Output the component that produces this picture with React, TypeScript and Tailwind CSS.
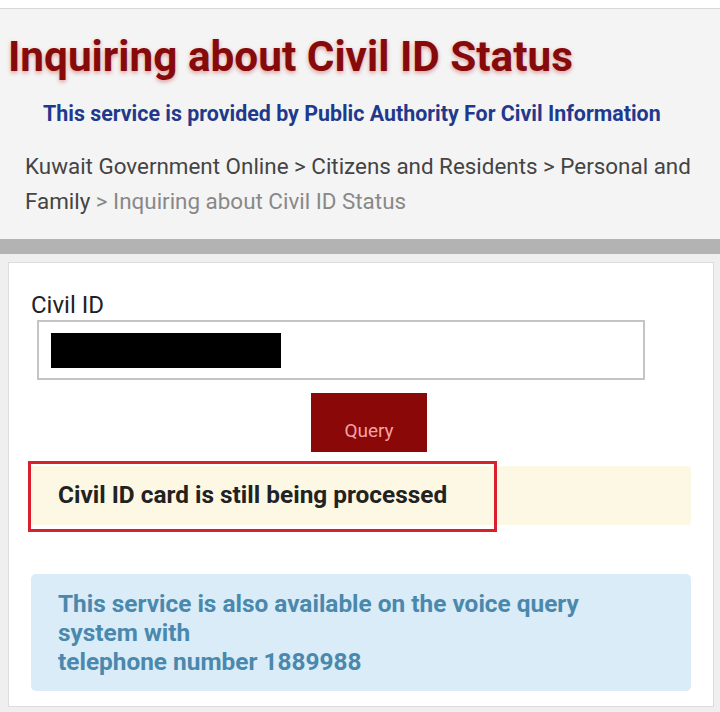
import React from "react";

export default function App() {
  const font = { fontFamily: 'Roboto, "Liberation Sans", sans-serif' };
  return (
    <div className="w-[720px] h-[712px] overflow-hidden bg-[#efefef]" style={font}>
      <div className="h-[9px] bg-white border-b border-[#d8d8d8]" />
      <div className="bg-[#f4f4f4] pt-[25px] pb-[20px]">
        <h1 className="pl-[8px] text-[42.3px] leading-[46px] font-bold text-[#870a0a] [text-shadow:0_2px_4px_rgba(190,50,50,0.45)]">
          Inquiring about Civil ID Status
        </h1>
        <p className="mt-[21px] pl-[43px] text-[21.4px] leading-[26px] font-bold text-[#1f3a8c]">
          This service is provided by Public Authority For Civil Information
        </p>
        <p className="mt-[22px] pl-[25px] pr-[16px] text-[22.4px] leading-[35px] text-[#444]">
          Kuwait Government Online &gt; Citizens and Residents &gt; Personal and Family <span className="text-[#888]">&gt; Inquiring about Civil ID Status</span>
        </p>
      </div>
      <div className="h-[15px] bg-[#b3b3b3]" />
      <div className="pl-[8px] pr-[6px] pt-[8px]">
        <div className="bg-white border border-[#dcdcdc] h-[445px] pt-[28px] pl-[22px] pr-[22px]">
          <label className="block text-[24px] leading-[28px] text-[#222]">Civil ID</label>
          <div className="mt-[1px] ml-[6px] w-[608px] h-[60px] border-2 border-[#c4c4c4] flex items-center pl-[12px]">
            <div className="w-[230px] h-[35px] bg-black" />
          </div>
          <div className="flex justify-center mt-[13px] pl-[16px]">
            <button className="w-[116px] h-[59px] bg-[#8a0808] text-[#f4a3a3] text-[19px] pt-[18px]">Query</button>
          </div>
          <div className="relative mt-[14px] w-[662px] h-[59px] bg-[#fcf8e3] rounded-[3px] ml-[-2px]">
            <div className="absolute left-[-1px] top-[-5px] w-[469px] h-[71px] border-[3px] border-[#d9202c]" />
            <div className="absolute left-[29px] top-0 h-[59px] flex items-center text-[24.4px] font-bold text-[#222]">
              Civil ID card is still being processed
            </div>
          </div>
          <div className="mt-[49px] w-[660px] h-[117px] bg-[#d9ecf7] rounded-[5px] pl-[27px] pt-[15px] text-[24.4px] leading-[29px] font-bold text-[#4a88ad]">
            This service is also available on the voice query<br />system with<br />telephone number 1889988
          </div>
        </div>
      </div>
    </div>
  );
}
